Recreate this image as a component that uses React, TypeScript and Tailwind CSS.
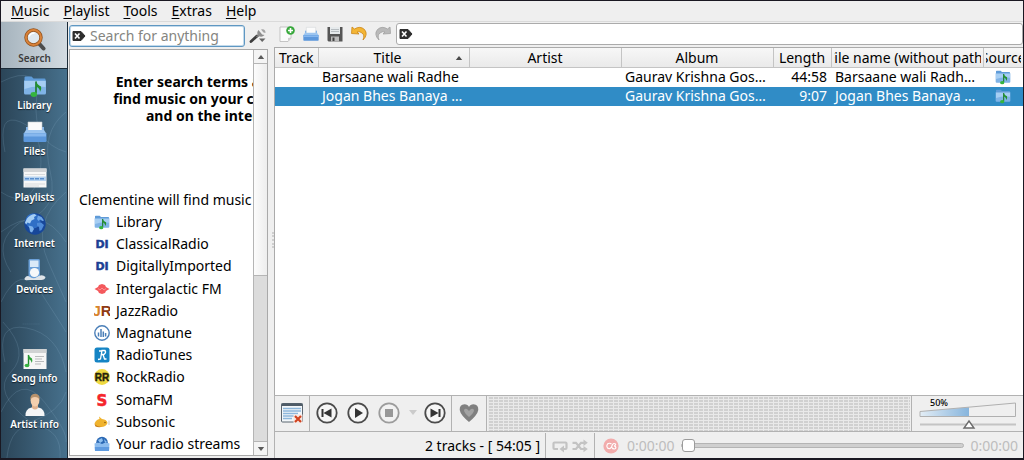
import React, { useState } from 'react';

const FolderArt = () => (
  <>
    <path d="M1.500 3.500 Q1.500 2.500 2.500 2.500 H8.500 L10.500 4.500 H21.500 Q22.500 4.500 22.500 5.500 V19 H1.500 Z" fill="#5f9bd8" />
    <path d="M1 6.500 H23 V19 Q23 20.500 21.500 20.500 H2.500 Q1 20.500 1 19 Z" fill="#7fb3e6" />
    <path d="M1.500 7 H22.500 V13 Q12 11.500 1.500 15 Z" fill="#a6cef3" />
    <path d="M13 7.500 V19.500" stroke="#187a25" strokeWidth="1.600" />
    <path d="M13 7 Q14 10.500 18 12.500 Q19 15 17 18 Q17 14 13 12.500 Z" fill="#23912f" />
    <ellipse cx="10.800" cy="20.500" rx="3.200" ry="2.400" fill="#35b53f" />
  </>
);

const FolderIcon = ({ className }: { className: string }) => (
  <svg viewBox="0 0 24 24" className={className} aria-hidden="true">
    <FolderArt />
  </svg>
);

const TrayIcon = ({ className }: { className: string }) => (
  <svg viewBox="0 0 24 24" className={className} aria-hidden="true">
    <path d="M3 7 H21 V14 H3 Z" fill="#7fb2e8" />
    <path d="M5 2 H19 V14 H5 Z" fill="#fbfbfb" stroke="#c8ccd0" strokeWidth=".6" />
    <path d="M3 10 H21 L23.500 14 H.5 Z" fill="#9cc5f0" />
    <path d="M.5 13.500 H23.500 V21 Q23.500 22 22.500 22 H1.500 Q.5 22 .5 21 Z" fill="#5b97dc" />
    <path d="M1 14 H23 V16.500 H1 Z" fill="#86b7ee" />
  </svg>
);

const SearchArt = () => (
  <>
    <path d="M16 16.500 L20.500 21.500" stroke="#4c4c4c" strokeWidth="4" strokeLinecap="round" />
    <circle cx="10.500" cy="10.500" r="7.500" fill="#dfe8ee" stroke="#8f501c" strokeWidth="3.400" />
    <circle cx="10.500" cy="10.500" r="7.500" fill="none" stroke="#d98239" strokeWidth="2" />
    <path d="M6 9.500 Q7.500 6 11.500 6" stroke="#fff" strokeWidth="1.300" fill="none" />
  </>
);

const PlaylistsArt = () => (
  <>
    <path d="M.5 2.500 H23.500 V21.500 H.5 Z" fill="#f7f7f7" />
    <path d="M.5 2.500 H23.500 V6 H.5 Z" fill="#d2d4d6" />
    <path d="M2 8.500 H22 M2 18 H22 M2 20 H16" stroke="#d9dbdd" />
    <path d="M1 10.500 H23 V15 H1 Z" fill="#b5d2f0" />
    <path d="M2 12.700 H22" stroke="#5a8fce" strokeWidth="1.400" strokeDasharray="4 1" />
  </>
);

const GlobeArt = () => (
  <>
    <circle cx="12" cy="12" r="10.700" fill="#17479a" />
    <circle cx="10" cy="9" r="7.500" fill="#2f6fc6" />
    <path d="M4 6.500 Q7 2.500 11.500 2 L13.500 3.500 L11 5 L11.500 7 L8.500 8.500 L7 11.500 L4.500 10.500 L3 12.500 L2 10.500 Z" fill="#a6cff5" />
    <path d="M15 3.500 L18.500 5 L21 8.500 L19.500 9 L17 7.500 L15.500 9 L14 7 Z" fill="#6da5e6" />
    <path d="M14 11 L18 10.500 L21 13 L18.500 18 L16.500 19 L16 15 L14 13.500 Z" fill="#4f8bd8" />
    <path d="M5.500 13.500 L9.500 14.500 L11 17 L9 20.500 L7 19.500 L6.500 16.500 Z" fill="#7db2ec" />
  </>
);

const DevicesArt = () => (
  <>
    <rect x="5.500" y="1" width="11.500" height="21" rx="1.500" fill="#6ba0d8" />
    <rect x="7" y="2.500" width="8.500" height="6.500" fill="#d9e9f8" />
    <circle cx="11.500" cy="14.500" r="4.600" fill="#f6f8fa" />
    <path d="M1.500 20.500 Q4 16.500 7 19 Q11 21.500 14 19 Q19 15.500 22.500 19 Q22 22.500 17 22 H5 Q1 23 1.500 20.500 Z" fill="#dfe4e8" />
  </>
);

const SongInfoArt = () => (
  <>
    <path d="M.5 2 H23.500 V22 H.5 Z" fill="#f6f6f6" />
    <path d="M.5 2 H23.500 V6 H.5 Z" fill="#d0d2d3" />
    <path d="M12 9.500 H21 M12 12 H19 M12 14.500 H21 M12 17 H18" stroke="#b9bbbd" />
    <path d="M5.500 8 V18" stroke="#1f8c2b" strokeWidth="1.400" />
    <path d="M5.500 7.500 Q6.500 10.500 9 11.500 Q10 14 8.500 16 Q8.500 13 5.500 12 Z" fill="#2fa13a" />
    <ellipse cx="4" cy="18.500" rx="2.400" ry="1.800" fill="#38b443" />
  </>
);

const ArtistArt = () => (
  <>
    <path d="M2.500 23 Q2 16 8.500 14.500 H15.500 Q22 16 21.500 23 Z" fill="#f4f5f6" />
    <path d="M9 11 H15 V15 Q12 18 9 15 Z" fill="#e0b390" />
    <ellipse cx="12" cy="7.500" rx="4.400" ry="6" fill="#f3cfae" />
    <path d="M7.400 7 Q6.800 1 12 .8 Q17.200 1 16.600 7 Q15.500 4 12 4 Q8.500 4 7.400 7 Z" fill="#b8926c" />
  </>
);

const sidebarTabs = [
  { label: 'Search', art: <SearchArt /> },
  { label: 'Library', art: <FolderArt /> },
  { label: 'Files', art: null },
  { label: 'Playlists', art: <PlaylistsArt /> },
  { label: 'Internet', art: <GlobeArt /> },
  { label: 'Devices', art: <DevicesArt /> },
  { label: '', art: null },
  { label: 'Song info', art: <SongInfoArt /> },
  { label: 'Artist info', art: <ArtistArt /> },
];

const DIArt = () => (
  <text x="8" y="12" textAnchor="middle" className="fill-[#1c3f94] stroke-[#1c3f94] stroke-[.5px] font-['DejaVu_Sans'] text-[11px] font-bold">DI</text>
);

const sources = [
  { name: 'Library', art: <g transform="scale(.667)"><FolderArt /></g> },
  { name: 'ClassicalRadio', art: <DIArt /> },
  { name: 'DigitallyImported', art: <DIArt /> },
  {
    name: 'Intergalactic FM',
    art: (
      <>
        <path d="M.5 8 L4 6 L5 4 L8 3 L11 4 L12 6 L15.500 8 L12 10 L11 12 L8 13 L5 12 L4 10 Z" fill="#f4595c" />
        <path d="M4 7.500 L6 9 L8 7 L10 9 L12 7.500" stroke="#fba0a0" fill="none" strokeWidth=".8" />
      </>
    ),
  },
  {
    name: 'JazzRadio',
    art: (
      <text x="8" y="13" textAnchor="middle" className="font-['Liberation_Sans'] text-[15px] font-bold">
        <tspan className="fill-[#d8832c]">J</tspan>
        <tspan className="fill-[#8f3a12]">R</tspan>
      </text>
    ),
  },
  {
    name: 'Magnatune',
    art: (
      <>
        <circle cx="8" cy="8" r="7.200" fill="#fff" stroke="#4b7fb8" strokeWidth="1.400" />
        <path d="M4.500 7.500 V11.500 M7 4 V12 M9.300 6.500 V12 M11.600 8 V11.500" stroke="#4b7fb8" strokeWidth="1.500" />
      </>
    ),
  },
  {
    name: 'RadioTunes',
    art: (
      <>
        <rect x=".5" y=".5" width="15" height="15" rx="2.500" fill="#1584c4" />
        <path d="M4 12.500 L6.500 12 L8 3.500 H11 Q12.500 5.500 10 7.500 H7.500 M9 7.500 L10.500 12 H12.500 M5 4 H8" stroke="#fff" strokeWidth="1.300" fill="none" />
      </>
    ),
  },
  {
    name: 'RockRadio',
    art: (
      <>
        <circle cx="8" cy="8" r="7.900" fill="#efd941" />
        <text x="8" y="12" textAnchor="middle" className="fill-[#26220c] stroke-[#26220c] stroke-[.4px] font-['Liberation_Sans'] text-[10px] font-bold">RR</text>
      </>
    ),
  },
  {
    name: 'SomaFM',
    art: <text x="8" y="13.500" textAnchor="middle" className="fill-[#f5252b] stroke-[#f5252b] stroke-[.5px] font-['DejaVu_Sans'] text-[15px] font-bold">S</text>,
  },
  {
    name: 'Subsonic',
    art: (
      <>
        <path d="M.5 9.500 Q2 5.500 5.500 5 L5 2.500 L8 5 Q13 5.500 13.500 9 Q12 13 7 13 Q1.500 13 .5 9.500 Z" fill="#f0b32e" />
        <path d="M.5 10 Q4 13.500 9 12.500 Q5 14 1.500 12.500 Z" fill="#c77c15" />
        <circle cx="11" cy="8.500" r=".8" fill="#8a5a10" />
        <path d="M15 6.500 V11" stroke="#cfcfcf" strokeWidth="1.200" />
      </>
    ),
  },
  {
    name: 'Your radio streams',
    art: (
      <>
        <circle cx="8" cy="6.500" r="5.800" fill="#2a68b4" />
        <path d="M4 4 L8 2 L9 5 L6 7 Z M10 3 L13 6 L11 7 Z" fill="#8fc0ef" />
        <path d="M.5 7.500 Q4 6 8 8 Q12 6 15.500 7.500 L15 15 H1 Z" fill="#8cbcee" />
        <path d="M.8 11 H15.200 L15 15 H1 Z" fill="#5f9be0" />
      </>
    ),
  },
];

const tracks = [
  { title: 'Barsaane wali Radhe', album: 'Gaurav Krishna Gos…', length: '44:58', file: 'Barsaane wali Radh…' },
  { title: 'Jogan Bhes Banaya …', album: 'Gaurav Krishna Gos…', length: '9:07', file: 'Jogan Bhes Banaya …' },
];

// Black tag with a cross, used to clear a search field
const ClearTag = () => (
  <svg viewBox="0 0 14 12" className="h-3 w-3.5 shrink-0" aria-hidden="true">
    <path d="M1 1.500 H9 L13 6 L9 10.500 H1 Z" fill="#2e2e2e" stroke="#2e2e2e" strokeLinejoin="round" />
    <path d="M3 3.500 L7.500 8.500 M7.500 3.500 L3 8.500" stroke="#fff" strokeWidth="1.600" />
  </svg>
);

const Separator = () => <div className="w-px self-stretch bg-[#b2b2b2]" />;

const RoundButton = ({ label, dim, children }: { label: string; dim?: boolean; children: React.ReactNode }) => (
  <button aria-label={label} className={dim ? 'opacity-50' : ''}>
    <svg viewBox="0 0 22 22" className="size-[22px]" aria-hidden="true">
      <circle cx="11" cy="11" r="9.700" fill="#f6f6f6" stroke="#4b4b4b" strokeWidth="1.800" />
      {children}
    </svg>
  </button>
);

const Sidebar = ({ active, onSelect }: { active: string; onSelect: (tab: string) => void }) => (
  <nav className="relative flex w-[67px] shrink-0 flex-col overflow-hidden border-r border-[#1b2b38] bg-linear-to-r from-[#2b4558] to-[#47718d] pb-6">
    <svg viewBox="0 0 67 436" preserveAspectRatio="none" className="absolute inset-0 h-full w-full" aria-hidden="true">
      <g fill="none" stroke="#8fb4cb" strokeOpacity=".2">
        <path d="M0 60 Q40 40 36 80 T66 130 M4 130 Q-4 90 20 100 T40 150 Q30 190 0 170" />
        <path d="M66 90 Q40 110 50 150 T20 200 Q-10 220 10 250 M0 210 Q40 180 66 220" />
        <path d="M66 170 Q30 200 48 240 T66 280 M0 280 Q20 240 40 270 T66 310" />
        <path d="M4 340 Q-6 300 26 306 T66 350 M2 300 Q30 330 10 350 T30 400 Q60 390 66 370" />
        <path d="M0 390 Q20 350 44 380 T66 420 M6 436 Q10 400 36 404 T60 436" />
        <path d="M22 124 H42 M22 302 H40 M22 400 H40" strokeDasharray="1 1" />
      </g>
    </svg>
    {sidebarTabs.map((tab, i) =>
      tab.label ? (
        <button
          key={tab.label}
          onClick={() => onSelect(tab.label)}
          className={`relative flex min-h-0 flex-1 flex-col items-center justify-end pb-[3px] pl-px text-[10px] leading-[14px] font-semibold ${active === tab.label ? 'border-b border-[#1b2b38] bg-linear-to-r from-[#a5b3bd] to-[#d3dbe1] text-[#3c3c3c]' : 'text-white [text-shadow:0_1px_1px_#14212b]'}`}
        >
          {tab.art ? (
            <svg viewBox="0 0 24 24" className="size-6" aria-hidden="true">{tab.art}</svg>
          ) : (
            <TrayIcon className="size-6" />
          )}
          {tab.label}
        </button>
      ) : (
        <div key={i} className="flex-1" />
      )
    )}
  </nav>
);

const SearchPane = () => (
  <section className="flex w-[200px] shrink-0 flex-col pt-[3px] pb-0.5 pl-px">
    <div className="flex items-center gap-1">
      <label className="flex h-[22px] w-44 items-center gap-1 rounded-[3px] border border-[#5f97c2] bg-white px-0.5 inset-ring inset-ring-[#c3daeb]">
        <ClearTag />
        <input aria-label="Search" placeholder="Search for anything" className="w-full min-w-0 text-[14px] leading-[18px] outline-none placeholder:text-[#858581]" />
      </label>
      <button aria-label="Search settings">
        <svg viewBox="0 0 18 18" className="size-[18px]" aria-hidden="true">
          <path d="M2 14.500 L8 9" stroke="#3d3d3d" strokeWidth="2.800" strokeLinecap="round" />
          <path d="M7.500 10 L12 6.500" stroke="#777" strokeWidth="2" />
          <path d="M9.500 3 Q7 6 9.500 9 Q13 11 15.500 8 L13 7.500 L11.500 5.500 Z" fill="#8d8d8d" />
          <path d="M12 2.500 Q16.500 1.500 16.500 6 L14.500 5.500 Z" fill="#a5a5a5" />
          <path d="M10 11.500 H16.500 L13.200 15 Z" fill="#666" />
        </svg>
      </button>
    </div>
    <div className="mt-0.5 flex min-h-0 flex-1 border border-[#a9a9a9] bg-white">
      <div className="flex min-w-0 flex-1 flex-col overflow-hidden whitespace-nowrap">
        <p className="w-[288px] pt-[23px] text-center text-[14px] leading-[17px] font-bold">
          Enter search terms above to
          <br />
          find music on your computer
          <br />
          and on the internet
        </p>
        <p className="mt-16 pt-0.5 pl-[9px] text-[14px] leading-5">Clementine will find music in:</p>
        <ul className="mt-px flex min-h-0 flex-1 flex-col pl-6">
          {sources.map((source) => (
            <li key={source.name} className="flex min-h-0 flex-1 items-center gap-1.5 text-[14px] leading-5">
              <svg viewBox="0 0 16 16" className="size-4 shrink-0" aria-hidden="true">{source.art}</svg>
              {source.name}
            </li>
          ))}
        </ul>
      </div>
      <div className="flex w-3.5 shrink-0 flex-col border-l border-[#b5b5b5] bg-[#dcdcdc]">
        <button aria-label="Scroll up" className="flex h-3.5 items-center justify-center border-b border-[#b5b5b5] bg-[#f4f4f4]">
          <svg viewBox="0 0 8 5" className="h-1 w-2" aria-hidden="true"><path d="M0 5 L4 0 L8 5 Z" fill="#5b5b5b" /></svg>
        </button>
        <div className="h-[212px] border-b border-[#b5b5b5] bg-linear-to-r from-[#fcfcfc] to-[#ededed]" />
        <button aria-label="Scroll down" className="mt-auto flex h-3.5 items-center justify-center border-t border-[#b5b5b5] bg-[#f4f4f4]">
          <svg viewBox="0 0 8 5" className="h-1 w-2" aria-hidden="true"><path d="M0 0 L4 5 L8 0 Z" fill="#5b5b5b" /></svg>
        </button>
      </div>
    </div>
  </section>
);

const Toolbar = () => (
  <div className="flex h-[25px] items-center gap-2 pb-0.5 pl-[5px]">
    <button aria-label="New playlist">
      <svg viewBox="0 0 16 16" className="size-4" aria-hidden="true">
        <path d="M1 1 H12 V12 L9 15.500 H1 Z" fill="#fbfbfb" stroke="#b9b9b9" strokeWidth=".8" />
        <path d="M12 11.500 L9 15.500 V12 Z" fill="#cfcfcf" />
        <circle cx="11.500" cy="4.500" r="4.300" fill="#38a83c" />
        <path d="M11.500 2 V7 M9 4.500 H14" stroke="#fff" strokeWidth="1.600" />
      </svg>
    </button>
    <button aria-label="Load playlist"><TrayIcon className="size-4" /></button>
    <button aria-label="Save playlist">
      <svg viewBox="0 0 16 16" className="size-4" aria-hidden="true">
        <path d="M.5 1 H15.500 V15.500 H1.500 L.5 14.500 Z" fill="#555" />
        <path d="M3 1 H13 V8 H3 Z" fill="#e6eaec" />
        <path d="M4 3.500 H12 M4 5.500 H12" stroke="#b7bdc1" />
        <path d="M4 10.500 H12 V15.500 H4 Z" fill="#bcbcbc" />
        <path d="M5.500 11.500 H7.500 V15 H5.500 Z" fill="#444" />
      </svg>
    </button>
    <button aria-label="Undo">
      <svg viewBox="0 0 16 16" className="size-4" aria-hidden="true">
        <path d="M.5 7.500 L1 1 L3.500 3 Q9 -.5 13.500 3.500 Q17.500 8.500 12 14 Q14 9 11 7 Q8.500 5 6 6 L8 8 Z" fill="#f3b535" stroke="#cb8618" strokeWidth=".8" />
      </svg>
    </button>
    <button aria-label="Redo" disabled>
      <svg viewBox="0 0 16 16" className="size-4" aria-hidden="true">
        <path d="M15.500 7.500 L15 1 L12.500 3 Q7 -.5 2.500 3.500 Q-1.500 8.500 4 14 Q2 9 5 7 Q7.500 5 10 6 L8 8 Z" fill="#b9b9b9" stroke="#a1a1a1" strokeWidth=".8" />
      </svg>
    </button>
    <label className="-ml-[3px] flex h-[22px] flex-1 items-center gap-1 rounded-[3px] border border-[#ababab] bg-white px-0.5">
      <ClearTag />
      <input aria-label="Filter playlist" className="w-full min-w-0 text-[14px] leading-[18px] outline-none" />
    </label>
  </div>
);

const HeadCell = ({ text, sorted }: { text: string; sorted?: boolean }) => (
  <th className="border-r border-b border-[#c4c4c4] p-0 font-normal last:border-r-0">
    <div className="relative mx-0.5 flex h-[19px] items-center justify-center overflow-hidden">
      <span className={sorted ? 'shrink-0 pr-3' : 'shrink-0'}>{text}</span>
      {sorted && (
        <svg viewBox="0 0 8 5" className="absolute right-1 h-1 w-2" aria-hidden="true"><path d="M0 5 L4 0 L8 5 Z" fill="#4a4a4a" /></svg>
      )}
    </div>
  </th>
);

const Playlist = () => {
  const [selected, setSelected] = useState(1);

  return (
    <div className="min-h-0 flex-1 overflow-hidden border-t border-l border-[#ababab] bg-white">
      <table className="w-full table-fixed border-collapse text-[14px] leading-[18px] whitespace-nowrap">
        <colgroup>
          <col className="w-[43px]" />
          <col className="w-[151px]" />
          <col />
          <col className="w-[152px]" />
          <col className="w-[58px]" />
          <col className="w-[152px]" />
          <col className="w-10" />
        </colgroup>
        <thead>
          <tr className="bg-linear-to-b from-[#f7f7f7] to-[#e9e9e9]">
            <HeadCell text="Track" />
            <HeadCell text="Title" sorted />
            <HeadCell text="Artist" />
            <HeadCell text="Album" />
            <HeadCell text="Length" />
            <HeadCell text="File name (without path)" />
            <HeadCell text="Source" />
          </tr>
        </thead>
        <tbody>
          {tracks.map((track, i) => (
            <tr key={track.title} onClick={() => setSelected(i)} className={`h-[19px] ${selected === i ? 'bg-[#308cc6] text-white' : ''}`}>
              <td className="p-0"></td>
              <td className="overflow-hidden py-0 pr-0 pl-1">{track.title}</td>
              <td className="p-0"></td>
              <td className="overflow-hidden py-0 pr-0 pl-1">{track.album}</td>
              <td className="py-0 pr-1 pl-0 text-right">{track.length}</td>
              <td className="overflow-hidden py-0 pr-0 pl-1">{track.file}</td>
              <td className="p-0"><FolderIcon className="mx-auto size-4" /></td>
            </tr>
          ))}
        </tbody>
      </table>
    </div>
  );
};

const Controls = () => (
  <div className="flex h-[37px] shrink-0 items-center border-y border-l border-[#b2b2b2]">
    <button aria-label="Clear playlist" className="px-[5px] pb-0.5">
      <svg viewBox="0 0 24 22" className="h-[22px] w-6" aria-hidden="true">
        <rect x="1.500" y="1.500" width="21" height="18.500" rx="1" fill="#f3f7fa" stroke="#5b6670" />
        <path d="M1.500 1.500 H22.500 V4 H1.500 Z" fill="#4f5c68" />
        <path d="M3 6.500 H21 M3 9 H21 M3 11.500 H18 M3 14 H14 M3 16.500 H12" stroke="#8db7dc" strokeWidth="1.300" />
        <rect x="13.500" y="12.500" width="9" height="8.500" fill="#f7e7e2" />
        <path d="M15 14 L21 20 M21 14 L15 20" stroke="#d0421f" strokeWidth="2.200" />
      </svg>
    </button>
    <Separator />
    <div className="flex items-center gap-[9px] pr-[5px] pb-0.5 pl-1.5">
      <RoundButton label="Previous track">
        <path d="M6.500 7 V15" stroke="#333" strokeWidth="2" />
        <path d="M15.500 6.500 V15.500 L7.500 11 Z" fill="#333" />
      </RoundButton>
      <RoundButton label="Play">
        <path d="M8 6 L16 11 L8 16 Z" fill="#333" />
      </RoundButton>
      <RoundButton label="Stop" dim>
        <path d="M7 7 H15 V15 H7 Z" fill="#444" />
      </RoundButton>
      <div className="flex items-center gap-[7px]">
        <button aria-label="Stop options">
          <svg viewBox="0 0 8 5" className="h-[5px] w-2" aria-hidden="true"><path d="M0 0 L4 5 L8 0 Z" fill="#cbcbcb" /></svg>
        </button>
        <RoundButton label="Next track">
          <path d="M15.500 7 V15" stroke="#333" strokeWidth="2" />
          <path d="M6.500 6.500 V15.500 L14.500 11 Z" fill="#333" />
        </RoundButton>
      </div>
    </div>
    <Separator />
    <button aria-label="Love" className="px-[7px] pb-0.5">
      <svg viewBox="0 0 20 20" className="size-5" aria-hidden="true">
        <path d="M10 19 Q1.500 12 .7 7 Q.5 1.300 5.500 1.200 Q8.800 1.200 10 4 Q11.200 1.200 14.500 1.200 Q19.500 1.300 19.300 7 Q18.500 12 10 19 Z" fill="#808080" />
        <path d="M10 14 Q5 10 5 7 Q6 5 8 6 L10 8 L12 6 Q14 5 15 7 Q15 10 10 14 Z" fill="#a3a3a3" />
      </svg>
    </button>
    <Separator />
    <div className="mx-px h-full flex-1 bg-[linear-gradient(to_right,#e9e9e9_1px,transparent_1px),linear-gradient(to_bottom,#e9e9e9_1px,#d0d0d0_1px)] bg-[size:5px_3px]" />
    <Separator />
    <div className="relative mr-1.5 ml-[7px] h-full w-[98px]">
      <span className="absolute top-px left-[11px] text-[9px] leading-3 font-medium">50%</span>
      <svg viewBox="0 0 98 35" className="h-[35px] w-[98px]" aria-hidden="true">
        <defs>
          <linearGradient id="volume" x1="0" x2="1">
            <stop offset="0" stopColor="#e3edf5" />
            <stop offset="1" stopColor="#87b5dd" />
          </linearGradient>
        </defs>
        <path d="M1 15.500 L50 11.200 V20.500 H1 Z" fill="url(#volume)" />
        <path d="M1 15.500 L96.500 7 V20.500 H1 Z" fill="none" stroke="#b0b0b0" />
        <path d="M1 28.500 H97" stroke="#c4c4c4" strokeWidth="2" />
        <path d="M50 25 L55 32 H45 Z" fill="#fff" stroke="#6b6b6b" strokeWidth="1.400" />
      </svg>
      <input type="range" aria-label="Volume" defaultValue={50} className="absolute inset-0 h-full w-full opacity-0" />
    </div>
  </div>
);

const StatusBar = () => {
  const [position, setPosition] = useState(0);

  return (
    <div className="flex h-[26px] shrink-0 items-center border-l border-[#b2b2b2] pt-px text-[14px] leading-5">
      <span className="w-[265px] text-right">2 tracks - [ 54:05 ]</span>
      <div className="ml-[5px] flex self-stretch"><Separator /></div>
      <div className="flex items-center gap-1 px-1.5">
        <button aria-label="Repeat" disabled>
          <svg viewBox="0 0 16 16" className="size-4" aria-hidden="true">
            <path d="M6 11 H2.500 Q1.500 11 1.500 10 V5.500 Q1.500 4.500 2.500 4.500 H13.500 Q14.500 4.500 14.500 5.500 V10 Q14.500 11 13.500 11 H11.500" fill="none" stroke="#c3c3c3" strokeWidth="2.200" />
            <path d="M12 7.500 V14.500 L7.500 11 Z" fill="#c3c3c3" />
          </svg>
        </button>
        <button aria-label="Shuffle" disabled>
          <svg viewBox="0 0 16 16" className="size-4" aria-hidden="true">
            <path d="M.5 4.800 H4 L9 11 H12 M.5 11 H4 L9 4.800 H12" fill="none" stroke="#c3c3c3" strokeWidth="2.200" />
            <path d="M11.500 1.500 L15.800 4.800 L11.500 8 Z M11.500 8 L15.800 11 L11.500 14.300 Z" fill="#c3c3c3" />
          </svg>
        </button>
      </div>
      <Separator />
      <button aria-label="Scrobbling" className="mx-2">
        <svg viewBox="0 0 16 16" className="size-4" aria-hidden="true">
          <circle cx="8" cy="8" r="7.600" fill="#f2acac" />
          <path d="M8.500 6 Q6.500 4.500 4.500 6 Q3 8 4.500 10 Q7 11.500 8.500 9 Q9.500 5.500 11 5.500 Q13 5.500 12.500 7 Q10.500 8 12.500 8.500 Q13.500 10.500 11.500 11 Q9.500 11 9 9.500" fill="none" stroke="#fff" strokeWidth="1.200" />
        </svg>
      </button>
      <span className="text-[#bdbdbd]">0:00:00</span>
      <input
        type="range"
        aria-label="Position"
        value={position}
        onChange={(e) => setPosition(Number(e.target.value))}
        className="mx-1.5 h-[5px] min-w-0 flex-1 appearance-none rounded-full border border-[#b4b4b4] bg-[#cfcfcf] [&::-webkit-slider-thumb]:size-[13px] [&::-webkit-slider-thumb]:appearance-none [&::-webkit-slider-thumb]:rounded-[3px] [&::-webkit-slider-thumb]:border [&::-webkit-slider-thumb]:border-[#9b9b9b] [&::-webkit-slider-thumb]:bg-white"
      />
      <span className="pr-[5px] text-[#bdbdbd]">0:00:00</span>
    </div>
  );
};

const App: React.FC = () => {
  const [activeTab, setActiveTab] = useState('Search');

  return (
    <div className="flex h-screen flex-col overflow-hidden border border-b-2 border-[#1a1822] bg-[#efefef] font-['Noto_Sans',sans-serif] text-black">
      <header className="flex h-[21px] shrink-0 items-center border-b border-[#dadada] pl-[3px] text-[14px] leading-5">
        {['Music', 'Playlist', 'Tools', 'Extras', 'Help'].map((menu) => (
          <button key={menu} className="px-[7px]">
            <u className="underline-offset-2">{menu[0]}</u>
            {menu.slice(1)}
          </button>
        ))}
      </header>
      <main className="flex min-h-0 flex-1">
        <Sidebar active={activeTab} onSelect={setActiveTab} />
        <SearchPane />
        <div className="flex w-1.5 shrink-0 items-center justify-end">
          <div className="h-4 border-l-2 border-dotted border-[#cfcfcf]" />
        </div>
        <section className="flex min-w-0 flex-1 flex-col">
          <Toolbar />
          <Playlist />
          <Controls />
          <StatusBar />
        </section>
      </main>
    </div>
  );
};

export default App;
